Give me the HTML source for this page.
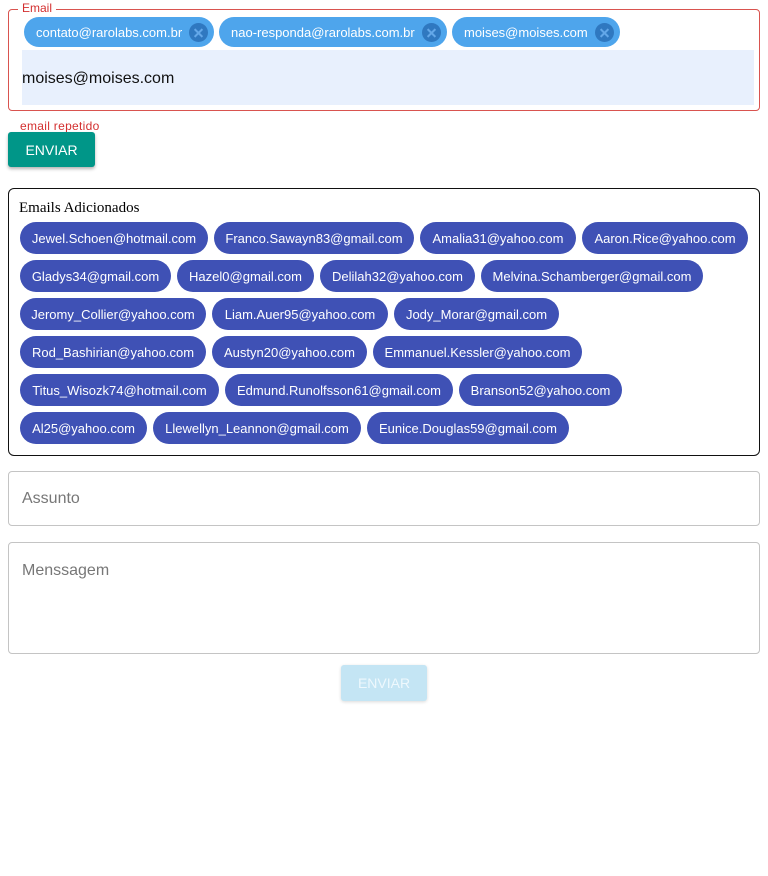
<!DOCTYPE html>
<html><head><meta charset="utf-8"><style>
*{box-sizing:border-box;margin:0;padding:0}
body{width:768px;height:876px;background:#fff;font-family:"Liberation Sans",Arial,sans-serif;position:relative;overflow:hidden}
.a{position:absolute}
.fs{left:8px;top:9px;width:752px;height:102px;border:1px solid #d9534f;border-radius:4px}
.lg{left:18px;top:1px;background:#fff;color:#d32f2f;font-size:12px;padding:0 4px;line-height:14px}
.tc{position:absolute;top:17px;height:30px;border-radius:15px;background:#4ea5ec;color:#fff;font-size:13px;line-height:32px;padding-left:12px}
.tc i{position:absolute;right:6px;top:6px;width:19px;height:19px;border-radius:50%;background:#2f78c0;}
.tc i:before,.tc i:after{content:"";position:absolute;left:4px;top:8.5px;width:11px;height:2px;background:#63a7e8;transform:rotate(45deg)}
.tc i:after{transform:rotate(-45deg)}
.inp{left:22px;top:50px;width:732px;height:55px;background:#e8f0fd;font-size:16px;line-height:58px;padding-left:0;color:#111}
.err{left:20px;top:119px;color:#d32f2f;font-size:12px;letter-spacing:0.3px}
.btn{left:8px;top:132px;width:87px;height:35px;background:#009688;color:#fff;font-size:14px;line-height:36px;text-align:center;border-radius:3px;box-shadow:0 2px 3px rgba(0,0,0,.3)}
.box{left:8px;top:188px;width:752px;height:268px;border:1px solid #111;border-radius:6px}
.bt{left:19px;top:200px;font-family:"Liberation Serif",serif;font-size:15px;color:#000}
.c{position:absolute;height:32px;border-radius:16px;background:#3f51b5;color:#fff;font-size:13px;line-height:34px;text-align:center;white-space:nowrap}
.f{left:8px;width:752px;border:1px solid #c4c4c4;border-radius:4px;color:#777;font-size:16px;padding-left:13px}
.dis{left:341px;top:665px;width:86px;height:36px;background:#c4e5f4;color:#eef8fd;font-size:14px;line-height:37px;text-align:center;border-radius:3px;box-shadow:0 1px 3px rgba(0,0,0,.15)}
</style></head><body>
<div class="a fs"></div>
<div class="a lg">Email</div>
<div class="tc" style="left:24px;width:190px">contato@rarolabs.com.br<i></i></div>
<div class="tc" style="left:219px;width:228px">nao-responda@rarolabs.com.br<i></i></div>
<div class="tc" style="left:452px;width:168px">moises@moises.com<i></i></div>
<div class="a inp">moises@moises.com</div>
<div class="a err">email repetido</div>
<div class="a btn">ENVIAR</div>
<div class="a box"></div>
<div class="a bt">Emails Adicionados</div>
<div class="c" style="left:20px;top:222px;width:188px">Jewel.Schoen@hotmail.com</div>
<div class="c" style="left:214px;top:222px;width:200px">Franco.Sawayn83@gmail.com</div>
<div class="c" style="left:420px;top:222px;width:156px">Amalia31@yahoo.com</div>
<div class="c" style="left:582px;top:222px;width:166px">Aaron.Rice@yahoo.com</div>
<div class="c" style="left:20px;top:260px;width:151px">Gladys34@gmail.com</div>
<div class="c" style="left:177px;top:260px;width:137px">Hazel0@gmail.com</div>
<div class="c" style="left:320px;top:260px;width:155px">Delilah32@yahoo.com</div>
<div class="c" style="left:481px;top:260px;width:222px">Melvina.Schamberger@gmail.com</div>
<div class="c" style="left:20px;top:298px;width:186px">Jeromy_Collier@yahoo.com</div>
<div class="c" style="left:212px;top:298px;width:176px">Liam.Auer95@yahoo.com</div>
<div class="c" style="left:394px;top:298px;width:165px">Jody_Morar@gmail.com</div>
<div class="c" style="left:20px;top:336px;width:186px">Rod_Bashirian@yahoo.com</div>
<div class="c" style="left:212px;top:336px;width:155px">Austyn20@yahoo.com</div>
<div class="c" style="left:373px;top:336px;width:209px">Emmanuel.Kessler@yahoo.com</div>
<div class="c" style="left:20px;top:374px;width:199px">Titus_Wisozk74@hotmail.com</div>
<div class="c" style="left:225px;top:374px;width:228px">Edmund.Runolfsson61@gmail.com</div>
<div class="c" style="left:459px;top:374px;width:163px">Branson52@yahoo.com</div>
<div class="c" style="left:20px;top:412px;width:127px">Al25@yahoo.com</div>
<div class="c" style="left:153px;top:412px;width:208px">Llewellyn_Leannon@gmail.com</div>
<div class="c" style="left:367px;top:412px;width:202px">Eunice.Douglas59@gmail.com</div>
<div class="a f" style="top:471px;height:55px;line-height:54px">Assunto</div>
<div class="a f" style="top:542px;height:112px;padding-top:19px">Menssagem</div>
<div class="a dis">ENVIAR</div>
</body></html>
